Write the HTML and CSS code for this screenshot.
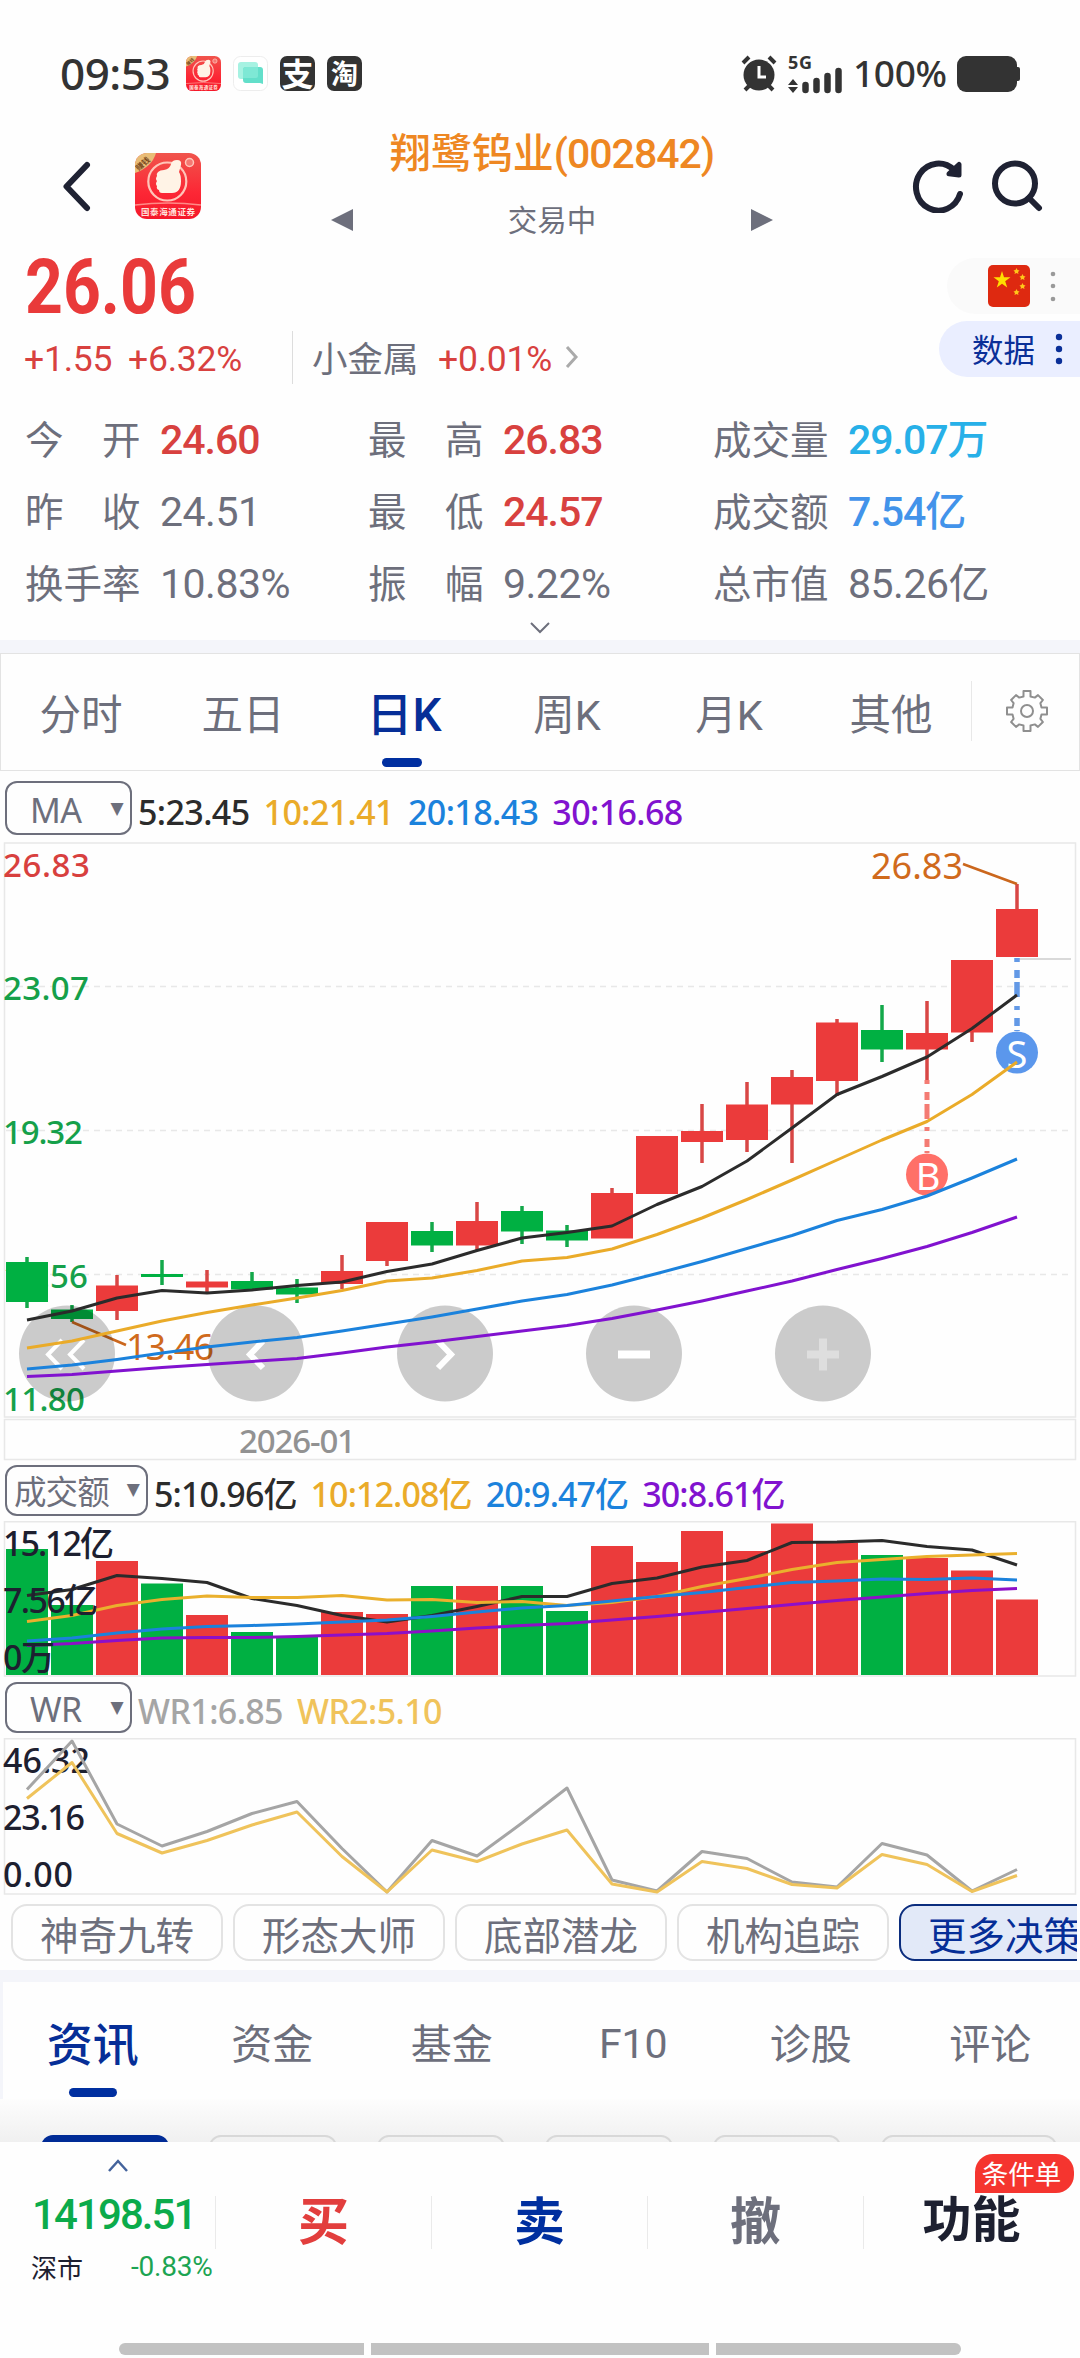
FILE: index.html
```html
<!DOCTYPE html>
<html lang="zh-CN">
<head>
    <meta charset="UTF-8">
    <meta name="viewport" content="width=device-width, initial-scale=1.0">
    <title>翔鹭钨业(002842)</title>
    <link rel="stylesheet" href="styles.css">
</head>
<body>

    <svg width="0" height="0" class="defs">
        <symbol id="app-logo" viewBox="0 0 66 66">
            <linearGradient id="red" x1="0" y1="0" x2="0" y2="1"><stop offset="0" stop-color="#f0544c"/><stop offset=".6" stop-color="#fc2735"/><stop offset="1" stop-color="#f5182a"/></linearGradient>
            <clipPath id="round"><rect width="66" height="66" rx="12"/></clipPath>
            <g clip-path="url(#round)">
                <rect width="66" height="66" fill="url(#red)"/>
                <path d="M0 0h21Q17 14 0 20z" fill="#e9bd77"/>
                <text x="-1" y="14" font-size="8" font-weight="700" fill="#7b4a20" transform="rotate(-42 7 10)">赚钱</text>
                <circle cx="32.300" cy="28.500" r="19" fill="none" stroke="#ffc5b9" stroke-width="2.200"/>
                <path d="M23 19q2-2 6-2 6-1 7-6 1-4 6-4 5 0 4 5l-2 7q2 3 2 9 0 12-9 12H27q-3 0-3-3-3-1-2-4-2-2 0-5-2-2 0-5-1-2 1-4z" fill="#fff3e6"/>
                <circle cx="54.500" cy="9.500" r="4" fill="#f57872" stroke="#ffc5b9" stroke-width="1.500"/>
                <path d="M0 52q33-4 66 0" fill="none" stroke="#ff8a86" stroke-width="1.500"/>
                <text x="6" y="62" font-size="8.500" font-weight="700" fill="#ffe3dc" textLength="54">国泰海通证券</text>
            </g>
        </symbol>
    </svg>

    <div class="status-bar">
        <span class="clock">09:53</span>
        <svg class="tray" width="35" height="35"><use href="#app-logo"/></svg>
        <svg class="tray" width="35" height="35" viewBox="0 0 35 35">
            <rect x=".5" y=".5" width="34" height="34" rx="7" fill="#fff" stroke="#ededed"/>
            <rect x="5" y="6" width="20" height="17" rx="3" fill="#a6f2e2"/>
            <path d="M13 11h14q3 0 3 3v14l-3-1H13q-3 0-3-3V14q0-3 3-3z" fill="#63dfca"/>
            <path d="M10 22V14q0-3 3-3h12v9q0 2-2 2z" fill="#7ee8d5"/>
        </svg>
        <span class="tray dark">支</span>
        <span class="tray dark small">淘</span>
        <div class="status-right">
            <svg width="36" height="37" viewBox="0 0 36 37">
                <circle cx="18" cy="20" r="15.500" fill="#333"/>
                <path d="M2 8l6-6M34 8l-6-6M4 35l5-5M32 35l-5-5" stroke="#333" stroke-width="4"/>
                <path d="M18 11v11h7" fill="none" stroke="#fff" stroke-width="3"/>
            </svg>
            <svg class="signal" width="55" height="38" viewBox="0 0 55 38">
                <text x="0" y="14" font-size="18" font-weight="700" fill="#333" textLength="24">5G</text>
                <path d="M0 30l5-6 5 6zM0 32l5 6 5-6z" fill="#333"/>
                <path d="M17.500 30v5M28.500 26v9M39.500 21v14M50.500 16v19" stroke="#333" stroke-width="6.500" stroke-linecap="round"/>
            </svg>
            <span class="percent">100%</span>
            <svg width="63" height="36" viewBox="0 0 63 36"><rect width="60" height="36" rx="9" fill="#333"/><rect x="56" y="11" width="7" height="14" rx="2" fill="#333"/></svg>
        </div>
    </div>

    <header class="header">
        <svg class="back" width="30" height="52" viewBox="0 0 30 52"><path d="M25 5L4.500 26.500 25 48" fill="none" stroke="#1f2233" stroke-width="6" stroke-linecap="round" stroke-linejoin="round"/></svg>
        <svg class="logo" width="66" height="66"><use href="#app-logo"/></svg>
        <div class="title">
            <h1>翔鹭钨业<span>(002842)</span></h1>
            <div class="state">
                <svg width="22" height="22"><path d="M22 0v22L0 11z" fill="#6d6f7c"/></svg>
                <span>交易中</span>
                <svg width="22" height="22"><path d="M0 0v22l22-11z" fill="#6d6f7c"/></svg>
            </div>
        </div>
        <svg class="refresh" width="52" height="54" viewBox="0 0 52 54">
            <path d="M48 35A22.500 23.500 0 1 1 42 11" fill="none" stroke="#1f2233" stroke-width="6" stroke-linecap="round"/>
            <path d="M47 5.500v10.500L37 14.800z" fill="#1f2233" stroke="#1f2233" stroke-width="5" stroke-linejoin="round"/>
        </svg>
        <svg class="search" width="52" height="54" viewBox="0 0 52 54">
            <circle cx="24" cy="24.500" r="20" fill="none" stroke="#1f2233" stroke-width="6"/>
            <path d="M38 39l10 10" stroke="#1f2233" stroke-width="6" stroke-linecap="round"/>
        </svg>
    </header>

    <section class="quote">
        <div class="quote-main">
            <div class="price"><span>26.06</span></div>
            <div class="change">
                <span class="up diff">+1.55</span>
                <span class="up rate">+6.32%</span>
                <i></i>
                <span class="sector">小金属</span>
                <span class="up">+0.01%</span>
                <svg width="14" height="22" viewBox="0 0 14 22"><path d="M2 1l9 10-9 10" fill="none" stroke="#aaa" stroke-width="3"/></svg>
            </div>
        </div>
        <div class="pills">
            <div class="pill flag">
                <svg width="42" height="42" viewBox="0 0 42 42">
                    <rect width="42" height="42" rx="5" fill="#de2910"/>
                    <path d="M14 6l2 6.300h6.500l-5.300 3.900 2 6.400-5.200-3.900-5.200 3.900 2-6.400-5.300-3.900H12z" fill="#ffde00"/>
                    <g fill="#ffc61a">
                        <path d="M28.500 3l1 2 2 .5-1.500 1.500.5 2-2-1-2 1 .5-2L25.500 5.500l2-.5z"/>
                        <path d="M34.500 9l1 2 2 .5-1.500 1.500.5 2-2-1-2 1 .5-2-1.500-1.500 2-.5z"/>
                        <path d="M34.500 18l1 2 2 .5-1.500 1.500.5 2-2-1-2 1 .5-2-1.500-1.500 2-.5z"/>
                        <path d="M28.500 24l1 2 2 .5-1.500 1.500.5 2-2-1-2 1 .5-2-1.500-1.500 2-.5z"/>
                    </g>
                </svg>
                <svg width="6" height="32"><g fill="#999"><circle cx="3" cy="4" r="2.300"/><circle cx="3" cy="16" r="2.300"/><circle cx="3" cy="29" r="2.300"/></g></svg>
            </div>
            <div class="pill data">
                <span>数据</span>
                <svg width="8" height="32"><g fill="#0a2f98"><circle cx="4" cy="4" r="3.200"/><circle cx="4" cy="16" r="3.200"/><circle cx="4" cy="28" r="3.200"/></g></svg>
            </div>
        </div>
    </section>

    <section class="stats">
        <dl><dt>今　开</dt><dd class="red">24.60</dd></dl>
        <dl><dt>最　高</dt><dd class="red">26.83</dd></dl>
        <dl><dt>成交量</dt><dd class="cyan">29.07万</dd></dl>
        <dl><dt>昨　收</dt><dd>24.51</dd></dl>
        <dl><dt>最　低</dt><dd class="red">24.57</dd></dl>
        <dl><dt>成交额</dt><dd class="blue">7.54亿</dd></dl>
        <dl><dt>换手率</dt><dd>10.83%</dd></dl>
        <dl><dt>振　幅</dt><dd>9.22%</dd></dl>
        <dl><dt>总市值</dt><dd>85.26亿</dd></dl>
    </section>
    <div class="expand"><svg width="20" height="12"><path d="M1 1l9 9 9-9" fill="none" stroke="#6d6f7c" stroke-width="2"/></svg></div>

    <nav class="period-tabs">
        <span>分时</span>
        <span>五日</span>
        <span class="active">日K</span>
        <span>周K</span>
        <span>月K</span>
        <span>其他</span>
        <div class="settings">
            <svg width="44" height="44" viewBox="0 0 44 44" fill="none" stroke="#8f8f8f" stroke-width="2">
                <path d="M18.500 7.500V2h7v5.500L29.800 8.600 33 6.100 37.900 11 35.400 14.200 36.500 18.500H42v7h-5.500L35.400 29.800 37.900 33 33 37.900 29.800 35.400 25.500 36.500V42h-7v-5.500L14.200 35.400 11 37.900 6.100 33 8.600 29.800 7.500 25.500H2v-7h5.500L8.600 14.200 6.100 11 11 6.100 14.200 8.600z" stroke-linejoin="round"/>
                <circle cx="22" cy="22" r="6"/>
            </svg>
        </div>
    </nav>

    <!-- 主图 -->
    <div class="indicator main">
        <span class="select">MA<b>▼</b></span>
        <span class="c5">5:23.45</span><span class="c10">10:21.41</span><span class="c20">20:18.43</span><span class="c30">30:16.68</span>
    </div>
    <svg class="chart" width="1080" height="619" viewBox="0 842 1080 619">
        <g class="frame">
            <path d="M4.500 843H1075.500V1417H4.500zM4.500 1419.500H1075.500V1459.500H4.500z"/>
            <path d="M6 986.500H1070M6 1130.500H1070M6 1274.500H1070" stroke-dasharray="6 5"/>
            <path d="M1017 959H1071" stroke="#ccc"/>
        </g>
        <g class="axis" fill="#15a04a">
            <text x="3" y="877" fill="#d8403e" textLength="87">26.83</text>
            <text x="3" y="999.500" textLength="86">23.07</text>
            <text x="3" y="1143.500" textLength="80">19.32</text>
            <text x="3" y="1287.500" textLength="85">15.56</text>
            <text x="3" y="1411" textLength="82">11.80</text>
            <text x="239" y="1453" fill="#929292" textLength="117">2026-01</text>
        </g>
        <path class="wick-up" d="M117 1275V1320M207 1270V1292M342 1255V1289M387 1222V1266M477 1202V1250M612 1188V1238M702 1104V1163M747 1082V1152M792 1070V1163M837 1019V1096M927 1001V1080M972 960V1042M1017 884V957"/>
        <path class="wick-down" d="M27 1257V1308M72 1305V1322M162 1260V1285M252 1272V1290M297 1279V1303M432 1222V1252M522 1206V1244M567 1225V1247M882 1005V1062"/>
        <path class="up-fill" d="M96 1285.500h42v25.500h-42zM186 1281.500h42v6h-42zM321 1271h42v13h-42zM366 1222h42v39h-42zM456 1221h42v24.500h-42zM591 1193h42v45.500h-42zM636 1136h42v58h-42zM681 1131h42v11h-42zM726 1104.500h42v35.500h-42zM771 1077h42v27.500h-42zM816 1022.500h42v58.500h-42zM906 1033h42v16.500h-42zM951 960h42v72.500h-42zM996 909h42v48h-42z"/>
        <path class="down-fill" d="M6 1262h42v40h-42zM51 1309.500h42v9.500h-42zM141 1274h42v3h-42zM231 1281h42v8.500h-42zM276 1287.500h42v7h-42zM411 1231h42v14.500h-42zM501 1211h42v20.500h-42zM546 1230.500h42v10h-42zM861 1030h42v19.500h-42z"/>
        <!-- 最高价 / 最低价 -->
        <g class="peak">
            <path d="M963 864L1017 884M72 1322L126 1345"/>
            <text x="871" y="879" textLength="92">26.83</text>
            <text x="126" y="1360" textLength="88">13.46</text>
        </g>
        <!-- 买卖点 -->
        <path d="M927 1080V1153" stroke="#f47b73" stroke-width="5" stroke-dasharray="4 8 8 4 15 8"/>
        <path d="M1017 958V1031" stroke="#6399e6" stroke-width="5.500" stroke-dasharray="4 8 8 4 15 9"/>
        <circle cx="927" cy="1174.500" r="21" fill="#ff7068"/>
        <circle cx="1017" cy="1052.500" r="21" fill="#5b97ec"/>
        <g class="mark"><text x="928" y="1190">B</text><text x="1017" y="1068">S</text></g>
        <g fill="#000" fill-opacity=".2">
            <circle cx="67" cy="1353.500" r="48"/><circle cx="256" cy="1353.500" r="48"/><circle cx="445" cy="1353.500" r="48"/><circle cx="634" cy="1353.500" r="48"/><circle cx="823" cy="1353.500" r="48"/>
        </g>
        <g fill="none" stroke="#fff">
            <path d="M62 1340L48 1354.500 62 1369M84 1340L70 1354.500 84 1369" stroke-width="4"/>
            <path d="M263 1341L250 1354.500 263 1368M438 1341L451 1354.500 438 1368" stroke-width="6"/>
            <path d="M618 1354.500H650" stroke-width="8"/>
            <path d="M807 1354.500H839M823 1338.500V1370.500" stroke-width="8" stroke="#dedede"/>
        </g>
        <g class="lines">
            <polyline stroke="#2b2b2b" points="27,1320 72,1311 117,1298 162,1290.500 207,1293 252,1290 297,1285.500 342,1282 387,1271.500 432,1264 477,1250.500 522,1238 567,1232.500 612,1226 657,1204.500 702,1186.500 747,1161 792,1128 837,1094.500 882,1076.500 927,1057 972,1028.500 1017,995"/>
            <polyline stroke="#eaab29" points="27,1348 72,1341 117,1331 162,1321 207,1312.500 252,1305 297,1298 342,1290.500 387,1281 432,1278 477,1270.500 522,1261 567,1257.500 612,1249 657,1234.500 702,1218 747,1199.500 792,1180 837,1160 882,1140 927,1121.500 972,1094.500 1017,1062"/>
            <polyline stroke="#1b82dc" points="27,1369 72,1365 117,1359.500 162,1353 207,1347 252,1342 297,1337.500 342,1331 387,1324 432,1317 477,1309 522,1301 567,1294.500 612,1285 657,1273.500 702,1261.500 747,1248.500 792,1235.500 837,1220.500 882,1209.500 927,1196 972,1178 1017,1159"/>
            <polyline stroke="#8112cf" points="27,1376.500 72,1374.500 117,1371 162,1367.500 207,1364.500 252,1361.500 297,1358.500 342,1353 387,1347 432,1342 477,1336.500 522,1331 567,1325.500 612,1318.500 657,1310 702,1301 747,1291 792,1281 837,1269.500 882,1258.500 927,1246.500 972,1232.500 1017,1217"/>
        </g>
    </svg>

    <!-- 成交额 -->
    <div class="indicator vol">
        <span class="select wide">成交额<b>▼</b></span>
        <span class="c5">5:10.96亿</span><span class="c10">10:12.08亿</span><span class="c20">20:9.47亿</span><span class="c30">30:8.61亿</span>
    </div>
    <svg class="chart" width="1080" height="156" viewBox="0 1521 1080 156">
        <path class="frame" d="M4.500 1521.800H1075.500V1676H4.500z"/>
        <path class="down-fill" d="M6 1549h42V1675H6zM51 1605h42V1675H51zM141 1583.500h42V1675H141zM231 1632h42V1675H231zM276 1636.500h42V1675H276zM411 1586h42V1675H411zM501 1586h42V1675H501zM546 1611h42V1675H546zM861 1555h42V1675H861z"/>
        <path class="up-fill" d="M96 1561h42V1675H96zM186 1615h42V1675H186zM321 1612h42V1675H321zM366 1614h42V1675H366zM456 1586h42V1675H456zM591 1546h42V1675H591zM636 1562h42V1675H636zM681 1531h42V1675H681zM726 1551h42V1675H726zM771 1523.500h42V1675H771zM816 1542.500h42V1675H816zM906 1558h42V1675H906zM951 1570.500h42V1675H951zM996 1599.500h42V1675H996z"/>
        <g class="lines">
            <polyline stroke="#2b2b2b" points="27,1595.500 72,1589.500 117,1575.500 162,1578.500 207,1582.500 252,1598.500 297,1605.500 342,1615.500 387,1622 432,1615.500 477,1606.500 522,1596.500 567,1596.500 612,1583.500 657,1578 702,1567 747,1560.500 792,1542.500 837,1542 882,1540.500 927,1546.500 972,1550 1017,1565"/>
            <polyline stroke="#eab02d" points="27,1621.500 72,1615.500 117,1605.500 162,1599.500 207,1596 252,1597.500 297,1597.500 342,1595.500 387,1600 432,1599.500 477,1602.500 522,1601.500 567,1605.500 612,1602.500 657,1596.500 702,1586.500 747,1578.500 792,1569.500 837,1562.500 882,1559.500 927,1556.500 972,1555 1017,1553.500"/>
            <polyline stroke="#1b82dc" points="27,1641 72,1638 117,1633 162,1629 207,1626.500 252,1625.500 297,1624 342,1622 387,1620 432,1616.500 477,1612 522,1608 567,1605.500 612,1601 657,1596.500 702,1592.500 747,1587.500 792,1582.500 837,1581 882,1579 927,1579.500 972,1578 1017,1580"/>
            <polyline stroke="#8d0fc8" points="27,1645.500 72,1643.500 117,1640.500 162,1638 207,1637.500 252,1637.500 297,1636.500 342,1635 387,1633.500 432,1631 477,1628 522,1625.500 567,1623.500 612,1620 657,1616.500 702,1612.500 747,1608.500 792,1604.500 837,1600.500 882,1597 927,1593.500 972,1590.500 1017,1588.500"/>
        </g>
        <g class="axis dark">
            <text x="3" y="1556" textLength="111">15.12亿</text>
            <text x="3" y="1613" textLength="95">7.56亿</text>
            <text x="3" y="1670" textLength="52">0万</text>
        </g>
    </svg>

    <!-- WR -->
    <div class="indicator wr">
        <span class="select">WR<b>▼</b></span>
        <span class="w1">WR1:6.85</span><span class="w2">WR2:5.10</span>
    </div>
    <svg class="chart" width="1080" height="157" viewBox="0 1738 1080 157">
        <path class="frame" d="M4.500 1738.800H1075.500V1894H4.500z"/>
        <g class="axis dark">
            <text x="3" y="1773" textLength="87">46.32</text>
            <text x="3" y="1830" textLength="82">23.16</text>
            <text x="3" y="1887" textLength="70">0.00</text>
        </g>
        <g class="lines">
            <polyline stroke="#a5a5a5" points="27,1789.500 72,1741 117,1824 162,1846 207,1831.500 252,1813.500 297,1801.500 342,1848.500 387,1892 432,1840.500 477,1856 522,1823 567,1788 612,1880 657,1891 702,1851.500 747,1858.500 792,1882 837,1887 882,1843.500 927,1855 972,1891 1017,1869.500"/>
            <polyline stroke="#efc35b" points="27,1798.500 72,1762.500 117,1833.500 162,1853 207,1840.500 252,1825 297,1812 342,1856.500 387,1892 432,1850 477,1861.500 522,1844 567,1830 612,1884 657,1892 702,1861.500 747,1868.500 792,1884.500 837,1888 882,1854.500 927,1864.500 972,1891.500 1017,1875.500"/>
        </g>
    </svg>

    <div class="chips">
        <span>神奇九转</span>
        <span>形态大师</span>
        <span>底部潜龙</span>
        <span>机构追踪</span>
        <span class="active">更多决策</span>
    </div>

    <nav class="info-tabs">
        <span class="active">资讯</span>
        <span>资金</span>
        <span>基金</span>
        <span class="latin">F10</span>
        <span>诊股</span>
        <span>评论</span>
    </nav>
    <div class="sub-tabs"><i class="active"></i><i></i><i></i><i></i><i></i><i class="long"></i></div>

    <footer class="footer">
        <div class="index">
            <svg width="20" height="13"><path d="M1 12l9-10 9 10" fill="none" stroke="#44639c" stroke-width="2.500"/></svg>
            <strong>14198.51</strong>
            <div><span>深市</span><em>-0.83%</em></div>
        </div>
        <div class="action buy">买</div>
        <div class="action sell">卖</div>
        <div class="action">撤</div>
        <div class="action more">功能<span class="badge">条件单</span></div>
    </footer>
    <div class="home-bar"><i></i><i></i><i></i></div>

</body>
</html>
```
FILE: styles.css
```css
* {
    box-sizing: border-box;
}
body {
    margin: 0;
    width: 1080px;
    height: 2358px;
    overflow: hidden;
    background: #fefefe;
    color: #6d6f7c;
    font-family: "Noto Sans", "Noto Sans CJK SC", sans-serif;
}
svg {
    display: block;
    flex: none;
}
span, strong, em, dt, dd {
    white-space: nowrap;
}
.defs {
    position: absolute;
}

/* 状态栏 */
.status-bar {
    display: flex;
    align-items: center;
    height: 120px;
    padding: 27px 60px 0 60px;
    color: #333;
}
.clock {
    width: 126px;
    margin-top: -2px;
    font-size: 44px;
    font-weight: 500;
    letter-spacing: -0.5px;
}
.tray {
    margin-right: 12px;
}
.tray.dark {
    width: 35px;
    height: 35px;
    border-radius: 7px;
    background: #333;
    color: #fff;
    font: 700 32px/33px "Noto Sans CJK SC", sans-serif;
    text-align: center;
}
.tray.dark.small {
    font-size: 27px;
}
.status-right {
    display: flex;
    align-items: center;
    margin-left: auto;
}
.signal {
    margin-left: 11px;
    overflow: visible;
}
.percent {
    flex: none;
    width: 114px;
    margin-top: -2px;
    padding-left: 10px;
    font-size: 37px;
    font-weight: 500;
    letter-spacing: -0.3px;
    line-height: 50px;
}

/* 标题栏 */
.header {
    display: flex;
    align-items: flex-start;
    height: 130px;
}
.back {
    margin: 40px 43px 0 62px;
}
.logo {
    margin-top: 33px;
}
.title {
    width: 442px;
    margin-left: 130px;
    text-align: center;
}
.title h1 {
    margin: 4px 0 0;
    color: #ee8722;
    font: 500 41px/60px Roboto, "Noto Sans CJK SC", sans-serif;
}
.title h1 span {
    letter-spacing: -1px;
}
.state {
    display: flex;
    align-items: center;
    justify-content: space-between;
    height: 44px;
    margin-top: 12px;
    font: 400 29.5px/44px "Noto Sans CJK SC", sans-serif;
}
.state svg {
    margin-top: 4px;
}
.refresh {
    margin: 39px 0 0 139px;
}
.search {
    margin: 39px 0 0 27px;
}

/* 报价 */
.quote {
    display: flex;
    justify-content: space-between;
    height: 148px;
}
.price {
    height: 77px;
    padding-left: 25px;
    color: #e93a3a;
    font: 700 76px/74px Roboto, sans-serif;
}
.price span {
    display: inline-block;
    transform: scaleX(0.87);
    transform-origin: left;
}
.change {
    display: flex;
    align-items: center;
    height: 60px;
    padding-left: 24px;
}
.change span {
    flex: none;
}
.up {
    margin-top: 3px;
    color: #d8413f;
    font: 400 35.5px/40px Roboto, sans-serif;
    letter-spacing: -0.2px;
}
.diff {
    width: 104px;
}
.rate {
    width: 164px;
}
.change i {
    width: 1px;
    height: 53px;
    background: #ddd;
}
.sector {
    width: 145px;
    padding-left: 19px;
    font: 400 35.5px/50px "Noto Sans CJK SC", sans-serif;
}
.change svg {
    margin-left: 13px;
}
.pills {
    display: flex;
    flex-direction: column;
    align-items: flex-end;
    gap: 7px;
    padding-top: 8px;
}
.pill {
    display: flex;
    align-items: center;
    height: 56px;
    border-radius: 28px 0 0 28px;
}
.pill.flag {
    width: 133px;
    padding-left: 41px;
    gap: 20px;
    background: #fafafa;
}
.pill.data {
    width: 141px;
    padding-left: 33px;
    gap: 20px;
    background: #eaeeff;
    color: #0a2f98;
    font: 400 31.5px/46px "Noto Sans CJK SC", sans-serif;
}
.pill.data span {
    margin-top: -3px;
}

.stats {
    display: grid;
    grid-template-columns: 343px 345px 1fr;
    grid-auto-rows: 72px;
    padding: 4px 0 0 25px;
}
.stats dl {
    display: flex;
    align-items: center;
    margin: 0;
}
.stats dt {
    width: 135px;
    margin-top: -3px;
    font: 400 38.5px/60px "Noto Sans CJK SC", sans-serif;
}
.stats dd {
    margin: 3px 0 0;
    font: 400 41px/60px Roboto, "Noto Sans CJK SC", sans-serif;
    letter-spacing: -0.5px;
}
.stats .red, .stats .cyan, .stats .blue {
    font-weight: 500;
    letter-spacing: -1px;
}
.stats .red {
    color: #d8413f;
}
.stats .cyan {
    color: #27b0e8;
}
.stats .blue {
    color: #4293ea;
}
.expand {
    display: flex;
    justify-content: center;
    height: 22px;
    padding-top: 4px;
}

/* 周期切换 */
.period-tabs {
    display: flex;
    height: 131px;
    border-top: 13px solid #f4f5fa;
    box-shadow: inset 0 0 0 1px #e3e3e3;
    font: 400 41.5px/125px Roboto, "Noto Sans CJK SC", sans-serif;
}
.period-tabs span {
    position: relative;
    width: 162px;
    text-align: center;
}
.period-tabs .active {
    left: -1px;
    color: #062e97;
    font-size: 46px;
    font-weight: 500;
}
.period-tabs .active::after, .info-tabs .active::after {
    content: "";
    position: absolute;
    left: 50%;
    bottom: 4px;
    width: 40px;
    height: 9px;
    margin-left: -22px;
    border-radius: 5px;
    background: #002fa0;
}
.settings {
    display: flex;
    align-items: center;
    width: 108px;
    height: 60px;
    margin: 28px 0 0 -1px;
    padding-left: 33px;
    border-left: 1px solid #e8e8e8;
}

/* 指标行 */
.indicator {
    display: flex;
    align-items: center;
    padding-left: 5px;
    font-size: 34px;
    font-weight: 500;
    letter-spacing: -0.6px;
    line-height: 46px;
}
.indicator.main {
    height: 71px;
    padding-top: 3px;
}
.indicator.vol {
    height: 60px;
    padding-bottom: 2px;
    letter-spacing: -0.9px;
}
.indicator.wr {
    height: 61px;
    padding-bottom: 1px;
}
.select {
    display: flex;
    align-items: center;
    justify-content: space-between;
    width: 127px;
    height: 51px;
    margin-right: 6px;
    padding: 4px 7px 0 23px;
    border: 2px solid #6d6f7c;
    border-radius: 12px;
    font: 400 34px/48px "Noto Sans", "Noto Sans CJK SC", sans-serif;
}
.main .select {
    height: 54px;
}
.select.wide {
    width: 143px;
    padding: 3px 7px 0 7px;
    font-size: 32.5px;
}
.select b {
    margin-top: -5px;
    font: 400 17px/20px "DejaVu Sans", sans-serif;
}
.c5, .c10, .c20, .c30, .w1, .w2 {
    margin: 7px 14px 0 0;
}
.c5 {
    color: #2b2b2b;
}
.c10 {
    color: #eaab29;
}
.c20 {
    color: #1b82dc;
}
.c30 {
    color: #8112cf;
}
.w1 {
    color: #a5a5a5;
}
.w2 {
    color: #f0c35b;
}

/* 图表 */
.frame {
    fill: none;
    stroke: #e8e8e8;
    stroke-width: 1.5;
}
.axis {
    font-size: 33px;
    font-weight: 500;
}
.axis.dark {
    font-size: 34px;
    fill: #1d2030;
}
.wick-up {
    stroke: #d84745;
    stroke-width: 3.5;
}
.wick-down {
    stroke: #13a84a;
    stroke-width: 3.5;
}
.up-fill {
    fill: #eb3b3b;
}
.down-fill {
    fill: #00b042;
}
.peak {
    fill: #d06a1c;
    font-size: 36px;
}
.peak path {
    stroke: #cb671d;
    stroke-width: 2.8;
}
.mark {
    fill: #fff;
    font-size: 38px;
    text-anchor: middle;
}
.lines {
    fill: none;
    stroke-width: 3;
    stroke-linejoin: round;
}

.chips {
    display: flex;
    gap: 10px;
    width: 1077px;
    height: 75px;
    padding: 9px 0 0 11px;
    overflow: hidden;
}
.chips span {
    flex: none;
    width: 212px;
    height: 57px;
    border: 2px solid #e3e3e3;
    border-radius: 16px;
    font: 400 38.5px/55px "Noto Sans CJK SC", sans-serif;
    text-align: center;
}
.chips .active {
    border-color: #0b2d7e;
    background: #e2e9f8;
    color: #062e97;
}

/* 资讯 */
.info-tabs {
    display: flex;
    height: 129px;
    border-top: 12px solid #f4f5fa;
    border-left: 3px solid #f4f5fa;
    font: 400 41px/118px "Noto Sans CJK SC", sans-serif;
}
.info-tabs span {
    position: relative;
    width: 180px;
    text-align: center;
}
.info-tabs .active {
    color: #062e97;
    font-size: 46px;
    font-weight: 500;
}
.info-tabs .active::after {
    bottom: 2px;
    width: 48px;
    margin-left: -24px;
}
.info-tabs .latin {
    padding-left: 4px;
    font-family: Roboto, sans-serif;
    line-height: 124px;
}
.sub-tabs {
    display: flex;
    gap: 40px;
    height: 43px;
    padding: 36px 0 0 41px;
    overflow: hidden;
    background: linear-gradient(#fdfdfd, #f0f0f0);
}
.sub-tabs i {
    flex: none;
    width: 128px;
    height: 50px;
    border: 2px solid #d8d8d8;
    border-radius: 12px;
}
.sub-tabs .active {
    border: 0;
    background: #002b96;
}
.sub-tabs .long {
    width: 176px;
}

/* 底部栏 */
.footer {
    display: flex;
    height: 201px;
}
.index {
    width: 215px;
    padding-top: 17px;
}
.index svg {
    margin-left: 108px;
}
.index strong {
    display: block;
    margin: 19px 0 0 32px;
    color: #0bab4b;
    font: 500 42px/48px Roboto, sans-serif;
    letter-spacing: -1.9px;
}
.index div {
    display: flex;
    align-items: center;
    gap: 48px;
    height: 40px;
    margin-top: 8px;
    padding-left: 31px;
    color: #1d2030;
    font: 400 26px/40px "Noto Sans CJK SC", sans-serif;
}
.index em {
    color: #1ca452;
    font: 400 28px/40px Roboto, sans-serif;
    letter-spacing: -0.2px;
}
.action {
    position: relative;
    width: 216px;
    height: 53px;
    margin-top: 54px;
    border-left: 1px solid #eaeaea;
    font: 700 51px/44px "Noto Sans CJK SC", sans-serif;
    text-align: center;
}
.buy {
    color: #e23e3d;
}
.sell {
    color: #002f9f;
}
.more {
    color: #1d2030;
    font-size: 49px;
    line-height: 40px;
}
.badge {
    position: absolute;
    top: -42px;
    right: 5px;
    width: 99px;
    height: 39px;
    padding-right: 6px;
    border-radius: 18px 18px 18px 0;
    background: #f5352f;
    color: #fff;
    font-size: 26.5px;
    font-weight: 400;
    line-height: 38px;
}
.home-bar {
    display: flex;
    gap: 7px;
    height: 12px;
    padding-left: 119px;
}
.home-bar i {
    width: 245px;
    background: #c2c2c2;
}
.home-bar i:first-child {
    border-radius: 6px 0 0 6px;
}
.home-bar i:nth-child(2) {
    width: 338px;
}
.home-bar i:last-child {
    border-radius: 0 6px 6px 0;
}
```
